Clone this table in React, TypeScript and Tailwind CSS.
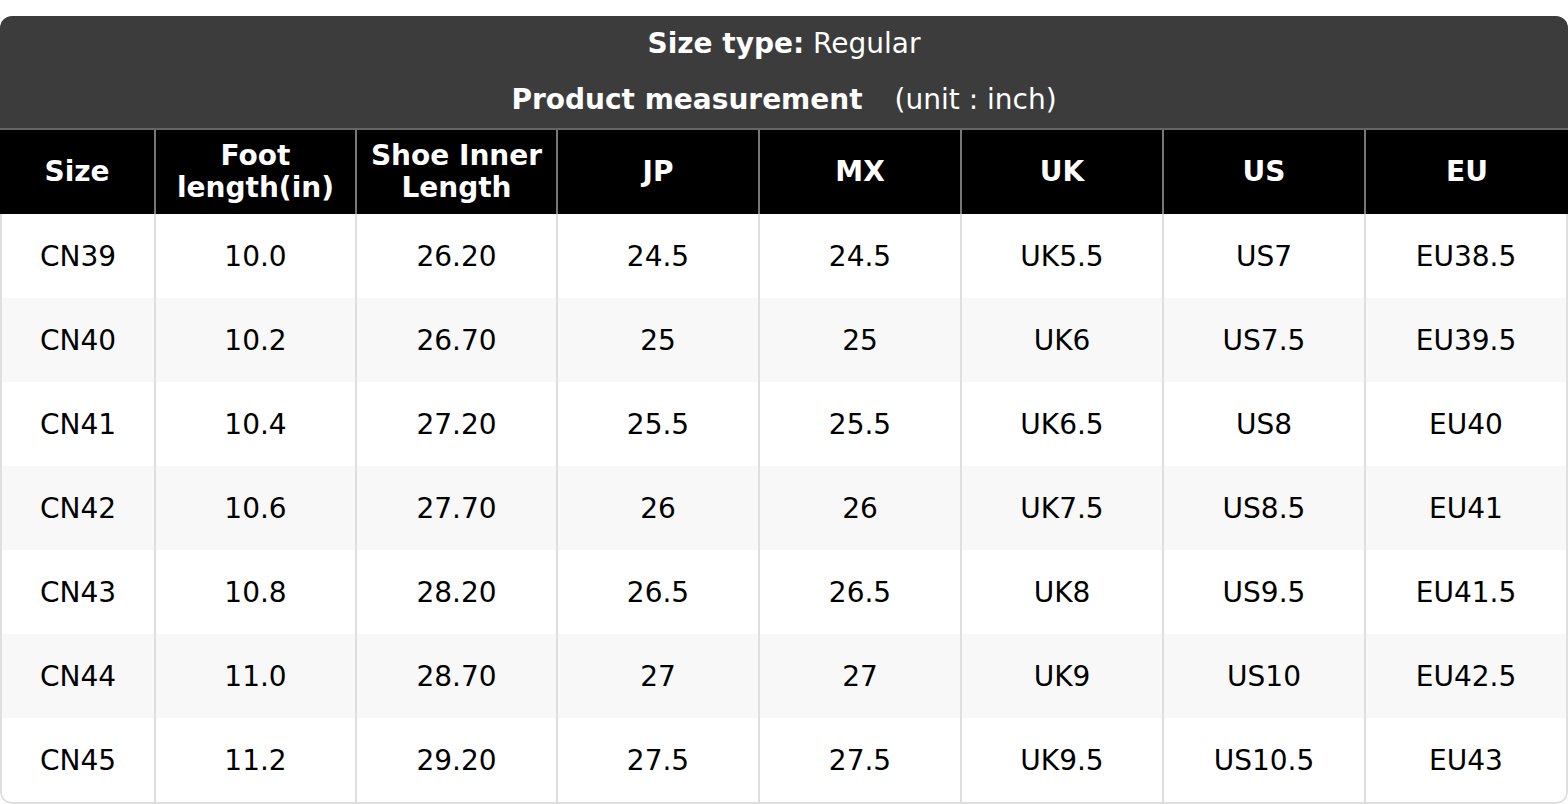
import React from 'react';

const headers = ['Size', 'Foot\nlength(in)', 'Shoe Inner\nLength', 'JP', 'MX', 'UK', 'US', 'EU'];

const rows = [
  ['CN39', '10.0', '26.20', '24.5', '24.5', 'UK5.5', 'US7', 'EU38.5'],
  ['CN40', '10.2', '26.70', '25', '25', 'UK6', 'US7.5', 'EU39.5'],
  ['CN41', '10.4', '27.20', '25.5', '25.5', 'UK6.5', 'US8', 'EU40'],
  ['CN42', '10.6', '27.70', '26', '26', 'UK7.5', 'US8.5', 'EU41'],
  ['CN43', '10.8', '28.20', '26.5', '26.5', 'UK8', 'US9.5', 'EU41.5'],
  ['CN44', '11.0', '28.70', '27', '27', 'UK9', 'US10', 'EU42.5'],
  ['CN45', '11.2', '29.20', '27.5', '27.5', 'UK9.5', 'US10.5', 'EU43'],
];

const App = () => {
  return (
    <div className="w-[1568px] h-[804px] bg-white pt-4 font-['DejaVu_Sans',sans-serif] text-[28px]">
      <div className="rounded-xl overflow-hidden">
        {/* title block */}
        <div className="bg-[#3c3c3c] text-white text-center pt-[12px] pb-[12px] flex flex-col gap-6 leading-[32px]">
          <div>
            <span className="font-bold">Size type:</span> Regular
          </div>
          <div>
            <span className="font-bold">Product measurement</span>
            <span className="ml-[32px]">(unit : inch)</span>
          </div>
        </div>

        <div className="border-t-2 border-[#666] grid grid-cols-[154px_201px_201px_202px_202px_202px_202px_1fr] bg-black text-white font-bold leading-[32px] h-[86px]">
          {headers.map((h, i) => (
            <div
              key={i}
              className={`flex items-center justify-center text-center whitespace-pre-line ${i > 0 ? 'border-l-2 border-[#777]' : ''}`}
            >
              {h}
            </div>
          ))}
        </div>

        <div className="border-l-2 border-r-2 border-b-2 border-[#dedede] rounded-b-xl overflow-hidden">
          {rows.map((r, ri) => (
            <div
              key={ri}
              className={`grid grid-cols-[152px_201px_201px_202px_202px_202px_202px_1fr] h-[84px] text-black ${ri % 2 === 1 ? 'bg-[#f8f8f8]' : 'bg-white'}`}
            >
              {r.map((c, ci) => (
                <div
                  key={ci}
                  className={`flex items-center justify-center pt-[2px] ${ci > 0 ? 'border-l-2 border-[#dedede]' : ''}`}
                >
                  {c}
                </div>
              ))}
            </div>
          ))}
        </div>
      </div>
    </div>
  );
};

export default App;
